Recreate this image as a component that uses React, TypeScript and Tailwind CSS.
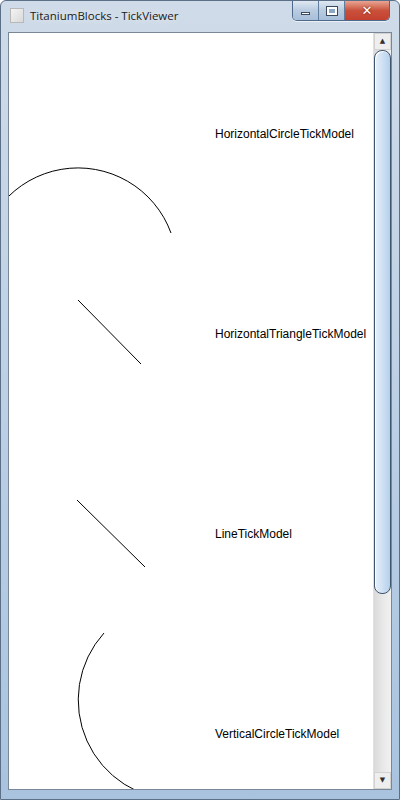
import { FC } from 'react';

const rows = [
  { label: 'HorizontalCircleTickModel', kind: 'hcircle' },
  { label: 'HorizontalTriangleTickModel', kind: 'line1' },
  { label: 'LineTickModel', kind: 'line2' },
  { label: 'VerticalCircleTickModel', kind: 'vcircle' },
];

const Tick: FC<{ kind: string }> = ({ kind }) => (
  <svg width="206" height="200" className="overflow-visible shrink-0" fill="none" stroke="#000" strokeWidth="1">
    {kind === 'hcircle' && <path d="M -30 232 A 99 99 0 0 1 162 199" />}
    {kind === 'line1' && <path d="M 69 66 L 132 130" />}
    {kind === 'line2' && <path d="M 68 66 L 136 133" />}
    {kind === 'vcircle' && <path d="M 95 -1 A 100 100 0 0 0 170 166" />}
  </svg>
);

const TitleBar: FC = () => (
  <div className="h-[31px] flex items-start shrink-0">
    <div className="mt-[7px] ml-[9px] w-[14px] h-[15px] border border-[#b8b8b8] bg-gradient-to-br from-[#f4f4f4] to-[#d9d9d9]" />
    <div className="ml-[6px] mt-[6px] text-[11.5px] leading-[17px] text-[#1a1a1a] font-['Open_Sans',sans-serif] [text-shadow:0_0_8px_rgba(255,255,255,0.9)]">
      TitaniumBlocks - TickViewer
    </div>
    <div className="ml-auto mr-[9px] flex h-[20px] rounded-b-[5px] border border-t-0 border-[#4d6a8a] overflow-hidden shadow-[0_1px_0_rgba(255,255,255,0.6)]">
      <div className="w-[26px] flex items-center justify-center bg-gradient-to-b from-[#dfe8f2] via-[#b9cbe0] to-[#a7bfda] border-r border-[#5f7d9c]">
        <div className="w-[9px] h-[3px] mt-[5px] bg-white border border-[#3b4a5a]" />
      </div>
      <div className="w-[26px] flex items-center justify-center bg-gradient-to-b from-[#dfe8f2] via-[#b9cbe0] to-[#a7bfda] border-r border-[#5f7d9c]">
        <div className="w-[10px] h-[8px] border-[2px] border-white outline outline-1 outline-[#3b4a5a] bg-[#8da8c4]" />
      </div>
      <div className="w-[44px] flex items-center justify-center bg-gradient-to-b from-[#e8a493] via-[#c9513c] to-[#c4402e]">
        <span className="text-white text-[13px] font-bold leading-none font-['DejaVu_Sans',sans-serif] [text-shadow:0_0_2px_#5a1a10]">✕</span>
      </div>
    </div>
  </div>
);

const ScrollBar: FC = () => (
  <div className="w-[18px] shrink-0 flex flex-col min-h-0 border-l border-[#e0e0e0] bg-gradient-to-r from-[#dadada] via-[#e8e8e8] to-[#f1f1f1]">
    <div className="h-[17px] shrink-0 flex items-center justify-center bg-[#eeeeee] border border-[#d2d2d2] text-[7px] leading-none text-[#303030] font-['DejaVu_Sans',sans-serif]">
      ▲
    </div>
    <div className="h-[544px] shrink-0 rounded-[8px] border border-[#3e556c] bg-gradient-to-r from-[#e6f0fa] via-[#cfe1f3] to-[#b5d0ec] shadow-[inset_1px_1px_0_#ffffff]" />
    <div className="flex-1 min-h-0" />
    <div className="h-[17px] shrink-0 flex items-center justify-center bg-[#eeeeee] border border-[#d2d2d2] text-[7px] leading-none text-[#303030] font-['DejaVu_Sans',sans-serif]">
      ▼
    </div>
  </div>
);

export default function App() {
  return (
    <div className="w-[400px] h-[800px] flex flex-col bg-gradient-to-b from-[#cfdbe8] via-[#bcd0e6] to-[#a9c3df] border border-[#5b6f86] rounded-t-[6px] overflow-hidden">
      <TitleBar />
      <div className="flex-1 min-h-0 flex px-[7px] pb-[9px]">
        <div className="flex-1 min-h-0 flex border border-[#7a8796] bg-white">
          <div className="flex-1 min-h-0 overflow-hidden relative">
            {rows.map((r) => (
              <div key={r.label} className="h-[200px] flex items-center first:mt-[1px]">
                <Tick kind={r.kind} />
                <span className="text-[12px] text-black font-['Liberation_Sans',Arial,sans-serif] whitespace-nowrap">
                  {r.label}
                </span>
              </div>
            ))}
          </div>
          <ScrollBar />
        </div>
      </div>
    </div>
  );
}
